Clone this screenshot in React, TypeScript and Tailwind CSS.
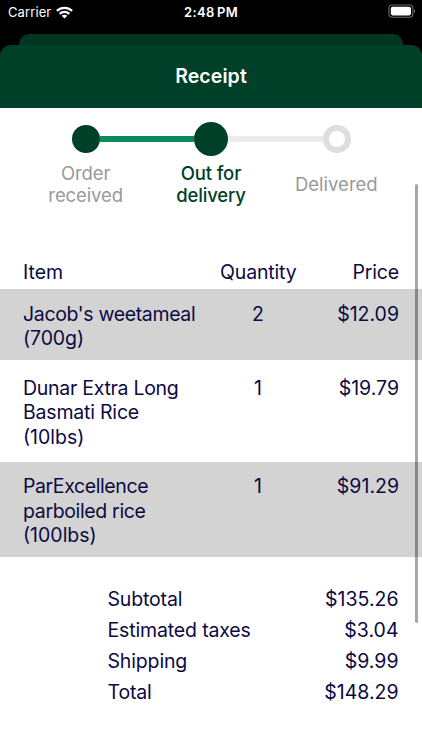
import clsx from 'clsx';

type Item = {
  name: { text: string; className: string }[];
  quantity: number;
  price: string;
};

const items: Item[] = [
  {
    name: [
      { text: "Jacob's weetameal", className: 'tracking-[-0.35px]' },
      { text: '(700g)', className: 'tracking-[-0.1px]' },
    ],
    quantity: 2,
    price: '$12.09',
  },
  {
    name: [
      { text: 'Dunar Extra Long', className: 'tracking-[-0.28px]' },
      { text: 'Basmati Rice', className: 'tracking-[-0.2px]' },
      { text: '(10lbs)', className: 'tracking-normal' },
    ],
    quantity: 1,
    price: '$19.79',
  },
  {
    name: [
      { text: 'ParExcellence', className: 'tracking-[-0.4px]' },
      { text: 'parboiled rice', className: 'tracking-[-0.35px]' },
      { text: '(100lbs)', className: 'tracking-normal' },
    ],
    quantity: 1,
    price: '$91.29',
  },
];

const totals = [
  { label: 'Subtotal', value: '$135.26' },
  { label: 'Estimated taxes', value: '$3.04' },
  { label: 'Shipping', value: '$9.99' },
  { label: 'Total', value: '$148.29' },
];

function StatusBar() {
  return (
    <div className="grid h-[34px] grid-cols-3 items-start text-[13px] leading-4 text-white">
      <div className="flex items-center gap-[5px] pt-1 pl-2">
        <span className="w-[43px] tracking-[0.1px]">Carrier</span>
        <svg width="17" height="13" viewBox="0 0 17 13" fill="none" stroke="white" strokeWidth="2.3">
          <path d="M0.9 4.9C5.1 0.8 11.9 0.8 16.1 4.9" />
          <path d="M3.7 7.8C6.4 5.2 10.6 5.2 13.3 7.8" />
          <path d="M8.5 12.6L5.7 9.8C7.3 8.4 9.7 8.4 11.3 9.8Z" fill="white" stroke="none" />
        </svg>
      </div>
      <span className="pt-1 text-center font-semibold tracking-[0.4px] [word-spacing:-1.5px]">2:48 PM</span>
      <div className="flex justify-end pt-[4px] pr-[6px]">
        <svg width="28" height="14" viewBox="0 0 28 14" fill="none">
          <rect x="0.9" y="1" width="24" height="12.2" rx="3.4" stroke="#6b6b6b" strokeWidth="1.1" />
          <rect x="2.8" y="2.8" width="20.2" height="8.6" rx="1.8" fill="white" />
          <path d="M26 5.2C27.6 5.8 27.6 8.4 26 9Z" fill="#6b6b6b" />
        </svg>
      </div>
    </div>
  );
}

function Stepper() {
  return (
    <div className="h-[124px] px-[23px] pt-[14.3px]">
      <div className="flex h-[34px] items-center px-[48.5px]">
        <div className="size-7 shrink-0 rounded-full bg-[#003f28]" />
        <div className="h-[6px] flex-1 bg-[#0b8a5c]" />
        <div className="size-[34px] shrink-0 rounded-full bg-[#003f28]" />
        <div className="h-[6px] flex-1 bg-[#ebebeb]" />
        <div className="size-7 shrink-0 rounded-full border-[6px] border-[#dedede] bg-white" />
      </div>
      <div className="mt-[5.7px] grid h-[45px] grid-cols-3 items-center text-center text-[18.5px] leading-[22.4px] text-[#999]">
        <span className="tracking-[-0.1px]">Order<br />received</span>
        <span className="font-medium tracking-[-0.15px] text-[#003f28]">Out for<br />delivery</span>
        <span>Delivered</span>
      </div>
    </div>
  );
}

export default function App() {
  return (
    <div className="flex h-[750px] w-[422px] flex-col overflow-hidden bg-black font-['Inter',sans-serif]">
      <StatusBar />
      <div className="mx-[19px] h-[11px] shrink-0 rounded-t-[10px] bg-[#003622]" />
      <div className="relative flex-1 bg-[linear-gradient(#003622,#003622)] bg-[length:384px_12px] bg-top bg-no-repeat">
        <div className="flex h-[63px] items-center justify-center rounded-t-[11px] bg-[#003f28]">
          <h1 className="text-[19.5px] font-semibold tracking-[0.1px] text-white">Receipt</h1>
        </div>

        <div className="h-[642px] bg-white text-[19.5px] leading-[24.3px] text-[#0c0a42]">
          <Stepper />

          <div className="grid h-[57.4px] grid-cols-[197px_76px_1fr] items-end pr-[23px] pb-[5px] pl-[23px]">
            <span>Item</span>
            <span className="text-center tracking-[-0.15px]">Quantity</span>
            <span className="text-right tracking-[-0.15px]">Price</span>
          </div>

          {items.map((item, i) => (
            <div
              key={item.name[0].text}
              className={clsx(
                'grid grid-cols-[197px_76px_1fr] px-[23px]',
                i % 2 === 0 ? 'bg-[#d3d3d3] pt-[12.5px] pb-[9.7px]' : 'pt-[15.8px] pb-[13px]'
              )}
            >
              <div>
                {item.name.map((line) => (
                  <div key={line.text} className={clsx('whitespace-nowrap', line.className)}>{line.text}</div>
                ))}
              </div>
              <span className="text-center">{item.quantity}</span>
              <span className="text-right">{item.price}</span>
            </div>
          ))}

          <div className="flex flex-col pt-[27px] pr-[23.5px] pl-[107.5px] leading-[31px]">
            {totals.map((row) => (
              <div key={row.label} className="flex justify-between">
                <span className="tracking-[-0.15px]">{row.label}</span>
                <span>{row.value}</span>
              </div>
            ))}
          </div>
        </div>

        {/* scroll indicator */}
        <div className="absolute top-[139px] right-[4px] h-[439px] w-[3px] rounded-full bg-black/35" />
      </div>
    </div>
  );
}
